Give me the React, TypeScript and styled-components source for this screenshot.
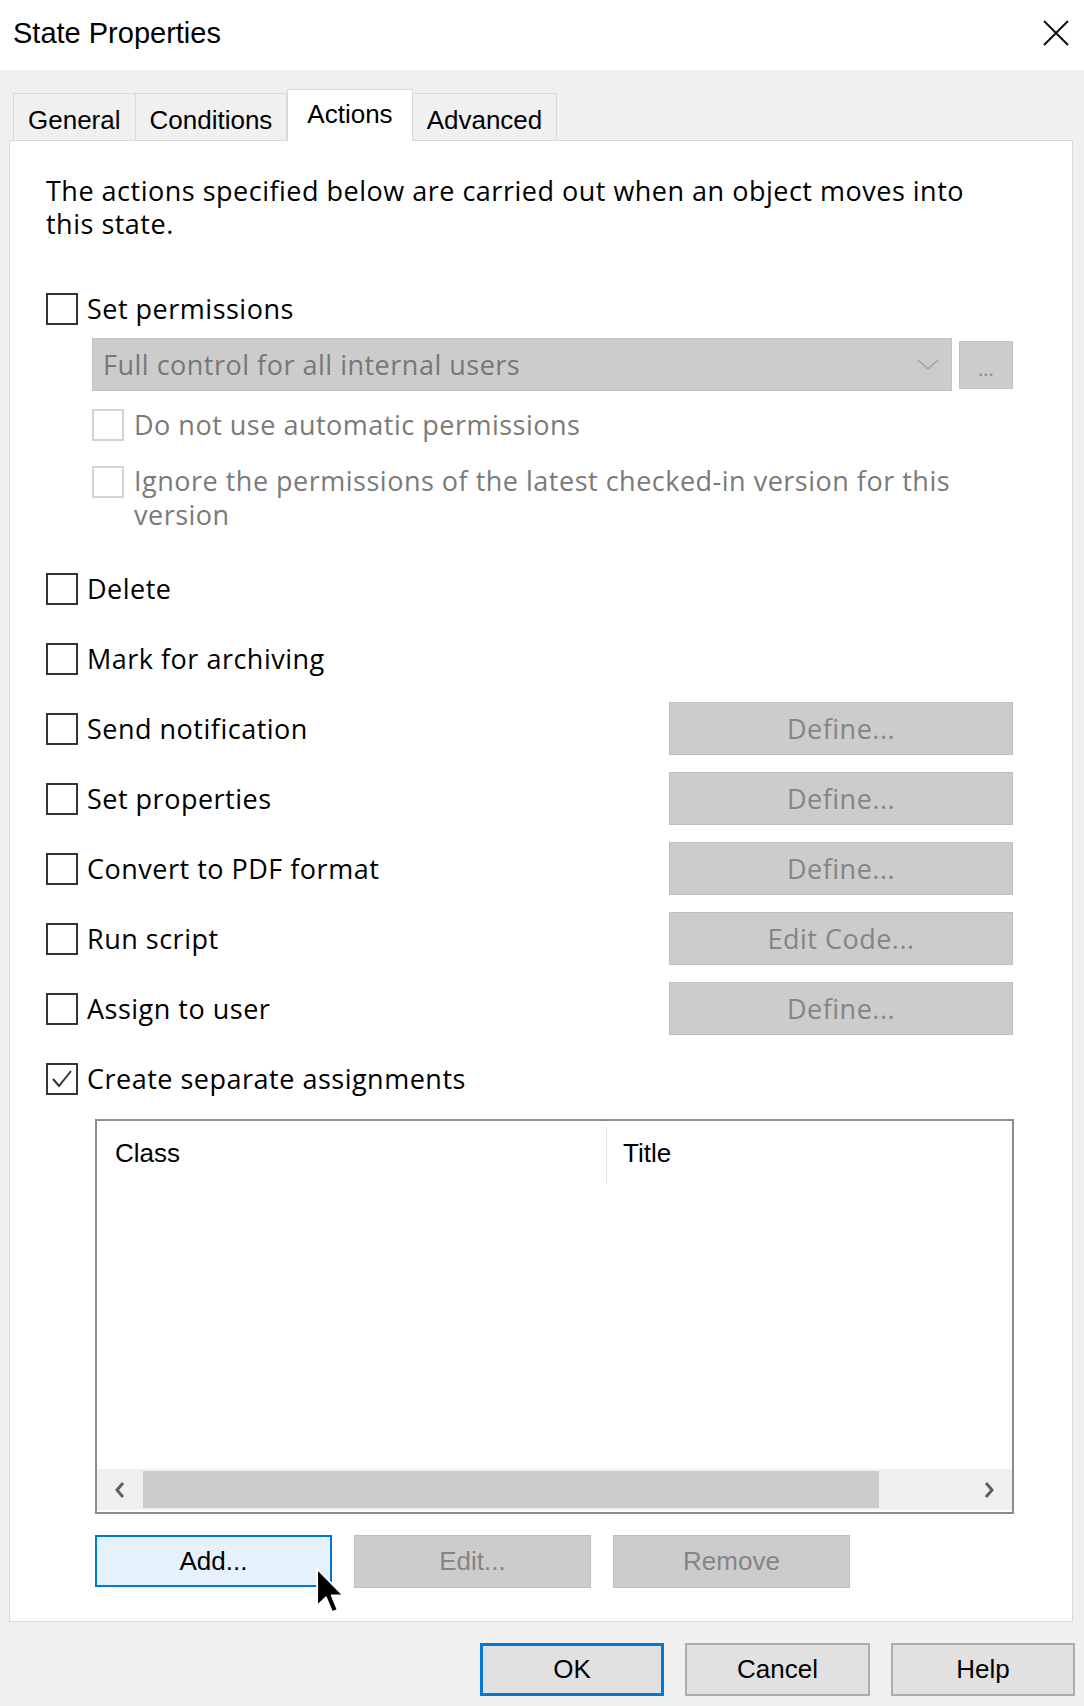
import React from 'react';
import styled, { createGlobalStyle } from 'styled-components';

const GlobalStyle = createGlobalStyle`
  html, body {
    margin: 0;
    padding: 0;
    background: #f0f0f0;
  }
  body {
    font-family: "Open Sans", "Segoe UI", sans-serif;
    color: #000;
  }
`;

const narrow = `"Liberation Sans", Arial, sans-serif`;
const wide = `"Open Sans", "Noto Sans", sans-serif`;

const Dialog = styled.div`
  width: 1084px;
  height: 1706px;
  background: #f0f0f0;
  display: flex;
  flex-direction: column;
  overflow: hidden;
`;

const TitleBar = styled.div`
  height: 70px;
  flex: none;
  background: #fff;
  display: flex;
  align-items: center;
  justify-content: space-between;
  padding: 0 14px 4px 13px;
  box-sizing: border-box;
`;

const Title = styled.span`
  font-family: ${narrow};
  font-size: 29px;
  color: #000;
`;

const CloseButton = styled.button`
  width: 28px;
  height: 28px;
  padding: 0;
  border: none;
  background: transparent;
  display: flex;
`;

const Body = styled.div`
  flex: 1;
  display: flex;
  flex-direction: column;
  padding: 19px 11px 0 9px;
  min-height: 0;
`;

const TabStrip = styled.div`
  height: 51px;
  flex: none;
  display: flex;
  align-items: flex-end;
  padding-left: 4px;
`;

const Tab = styled.div<{ $active?: boolean }>`
  position: relative;
  box-sizing: border-box;
  height: ${p => (p.$active ? '52px' : '47px')};
  margin-bottom: ${p => (p.$active ? '-1px' : '0')};
  margin-left: ${p => (p.$active ? '0' : '-1px')};
  padding: ${p => (p.$active ? '9px 19px 0' : '11px 14px 0')};
  border: 1px solid #d9d9d9;
  border-bottom: none;
  background: ${p => (p.$active ? '#fff' : '#f0f0f0')};
  z-index: ${p => (p.$active ? 2 : 1)};
  font-family: ${narrow};
  font-size: 26px;
  line-height: 30px;
  color: #000;
  &:first-child {
    margin-left: 0;
  }
`;

const Panel = styled.div`
  flex: 1;
  display: flex;
  flex-direction: column;
  background: #fff;
  border: 1px solid #d9d9d9;
  padding: 33px 59px 0 36px;
  min-height: 0;
`;

const Description = styled.p`
  margin: 0;
  font-family: ${wide};
  font-size: 27px;
  line-height: 33px;
  letter-spacing: 0.5px;
`;

const CheckRow = styled.label<{ $top?: number; $disabled?: boolean }>`
  display: flex;
  align-items: center;
  gap: 9px;
  margin-top: ${p => p.$top ?? 0}px;
  font-family: ${wide};
  font-size: 27px;
  line-height: 32px;
  letter-spacing: 0.5px;
  color: ${p => (p.$disabled ? '#7a7a7a' : '#000')};
`;

const WrapRow = styled(CheckRow)`
  align-items: flex-start;
  gap: 10px;
  & > span:last-child {
    line-height: 34px;
    margin-top: -2px;
  }
`;

const Box = styled.span<{ $disabled?: boolean }>`
  flex: none;
  width: 32px;
  height: 32px;
  box-sizing: border-box;
  border: 2px solid ${p => (p.$disabled ? '#d4d4d4' : '#333')};
  background: #fff;
  display: flex;
  align-items: center;
  justify-content: center;
`;

const SubBlock = styled.div`
  margin-left: 46px;
  margin-top: 13px;
  display: flex;
  flex-direction: column;
`;

const ComboRow = styled.div`
  display: flex;
  align-items: center;
  gap: 7px;
`;

const Combo = styled.div`
  width: 860px;
  height: 53px;
  box-sizing: border-box;
  background: #cccccc;
  border: 1px solid #c2c2c2;
  display: flex;
  align-items: center;
  justify-content: space-between;
  padding: 0 12px 0 10px;
  font-family: ${wide};
  font-size: 27px;
  letter-spacing: 0.5px;
  color: #777;
`;

const MoreButton = styled.div`
  width: 54px;
  height: 48px;
  box-sizing: border-box;
  background: #cccccc;
  border: 1px solid #c2c2c2;
  display: flex;
  align-items: center;
  justify-content: center;
  padding-top: 8px;
  font-family: ${wide};
  font-size: 20px;
  color: #8a8a8a;
`;

const ActionList = styled.div`
  margin-top: 30px;
  display: flex;
  flex-direction: column;
  gap: 17px;
`;

const ActionRow = styled.div`
  height: 53px;
  display: flex;
  align-items: center;
  justify-content: space-between;
`;

const GrayButton = styled.div<{ $width?: number; $font?: 'wide' | 'narrow' }>`
  width: ${p => p.$width ?? 344}px;
  height: 53px;
  box-sizing: border-box;
  background: #cccccc;
  border: 1px solid #bfbfbf;
  display: flex;
  align-items: center;
  justify-content: center;
  font-family: ${p => (p.$font === 'narrow' ? narrow : wide)};
  font-size: ${p => (p.$font === 'narrow' ? 26 : 27)}px;
  letter-spacing: ${p => (p.$font === 'narrow' ? 0 : 0.5)}px;
  color: #858585;
`;

const ListView = styled.div`
  margin: 14px 0 0 49px;
  width: 919px;
  height: 395px;
  box-sizing: border-box;
  border: 2px solid #8b8c90;
  display: flex;
  flex-direction: column;
  padding-top: 6px;
`;

const HeaderRow = styled.div`
  height: 56px;
  display: flex;
  font-family: ${narrow};
  font-size: 26px;
`;

const HeaderCell = styled.div<{ $width?: number; $pad: number }>`
  box-sizing: border-box;
  width: ${p => (p.$width ? `${p.$width}px` : 'auto')};
  flex: ${p => (p.$width ? 'none' : 1)};
  padding-left: ${p => p.$pad}px;
  padding-bottom: 4px;
  display: flex;
  align-items: center;
  border-right: ${p => (p.$width ? '1px solid #e5e5e5' : 'none')};
`;

const ListBody = styled.div`
  flex: 1;
`;

const ScrollBar = styled.div`
  height: 41px;
  margin-bottom: 2px;
  background: #f0f0f0;
  display: flex;
  align-items: center;
`;

const ScrollArrow = styled.div`
  width: 46px;
  height: 100%;
  display: flex;
  align-items: center;
  justify-content: center;
`;

const ScrollTrack = styled.div`
  flex: 1;
  height: 37px;
  display: flex;
`;

const ScrollThumb = styled.div`
  width: 736px;
  height: 100%;
  background: #cdcdcd;
`;

const ButtonRow = styled.div`
  margin: 21px 0 0 49px;
  display: flex;
  gap: 22px;
`;

const AddButton = styled.div`
  position: relative;
  width: 237px;
  height: 52px;
  box-sizing: border-box;
  background: #e5f1fb;
  border: 2px solid #0078d7;
  display: flex;
  align-items: center;
  justify-content: center;
  font-family: ${narrow};
  font-size: 26px;
  color: #000;
`;

const Pointer = styled.svg`
  position: absolute;
  left: 219px;
  top: 30px;
  z-index: 5;
`;

const Footer = styled.div`
  flex: none;
  display: flex;
  justify-content: flex-end;
  gap: 21px;
  padding: 21px 9px 10px 0;
`;

const DialogButton = styled.div<{ $default?: boolean; $width: number }>`
  width: ${p => p.$width}px;
  height: 53px;
  box-sizing: border-box;
  background: #e1e1e1;
  border: ${p => (p.$default ? '3px solid #0078d7' : '2px solid #adadad')};
  display: flex;
  align-items: center;
  justify-content: center;
  font-family: ${narrow};
  font-size: 26px;
  color: #000;
`;

const Check = ({ checked, disabled }: { checked?: boolean; disabled?: boolean }) => (
  <Box $disabled={disabled}>
    {checked && (
      <svg width="24" height="24" viewBox="0 0 24 24">
        <polyline points="3,12 9,19 21,4" fill="none" stroke="#333" strokeWidth="2" />
      </svg>
    )}
  </Box>
);

const actions: { label: string; button?: string; checked?: boolean }[] = [
  { label: 'Delete' },
  { label: 'Mark for archiving' },
  { label: 'Send notification', button: 'Define...' },
  { label: 'Set properties', button: 'Define...' },
  { label: 'Convert to PDF format', button: 'Define...' },
  { label: 'Run script', button: 'Edit Code...' },
  { label: 'Assign to user', button: 'Define...' },
  { label: 'Create separate assignments', checked: true },
];

const App: React.FC = () => {
  return (
    <Dialog>
      <GlobalStyle />
      <TitleBar>
        <Title>State Properties</Title>
        <CloseButton aria-label="Close">
          <svg width="28" height="28" viewBox="0 0 28 28">
            <path d="M2 2 L26 26 M26 2 L2 26" stroke="#111" strokeWidth="2" fill="none" />
          </svg>
        </CloseButton>
      </TitleBar>

      <Body>
        <TabStrip>
          <Tab>General</Tab>
          <Tab>Conditions</Tab>
          <Tab $active>Actions</Tab>
          <Tab>Advanced</Tab>
        </TabStrip>

        <Panel>
          <Description>
            The actions specified below are carried out when an object moves into this state.
          </Description>

          <CheckRow $top={53}>
            <Check />
            <span>Set permissions</span>
          </CheckRow>

          <SubBlock>
            <ComboRow>
              <Combo>
                <span>Full control for all internal users</span>
                <svg width="22" height="12" viewBox="0 0 22 12">
                  <polyline points="1,1 11,10 21,1" fill="none" stroke="#a3a3a3" strokeWidth="1.6" />
                </svg>
              </Combo>
              <MoreButton>...</MoreButton>
            </ComboRow>
            <CheckRow $top={18} $disabled style={{ gap: 10 }}>
              <Check disabled />
              <span>Do not use automatic permissions</span>
            </CheckRow>
            <WrapRow $top={25} $disabled>
              <Check disabled />
              <span>Ignore the permissions of the latest checked-in version for this version</span>
            </WrapRow>
          </SubBlock>

          <ActionList>
            {actions.map(a => (
              <ActionRow key={a.label}>
                <CheckRow>
                  <Check checked={a.checked} />
                  <span>{a.label}</span>
                </CheckRow>
                {a.button && <GrayButton>{a.button}</GrayButton>}
              </ActionRow>
            ))}
          </ActionList>

          <ListView>
            <HeaderRow>
              <HeaderCell $width={510} $pad={18}>Class</HeaderCell>
              <HeaderCell $pad={16}>Title</HeaderCell>
            </HeaderRow>
            <ListBody />
            <ScrollBar>
              <ScrollArrow>
                <svg width="12" height="18" viewBox="0 0 12 18">
                  <polyline points="9,2 3,9 9,16" fill="none" stroke="#606060" strokeWidth="3" />
                </svg>
              </ScrollArrow>
              <ScrollTrack>
                <ScrollThumb />
              </ScrollTrack>
              <ScrollArrow>
                <svg width="12" height="18" viewBox="0 0 12 18">
                  <polyline points="3,2 9,9 3,16" fill="none" stroke="#606060" strokeWidth="3" />
                </svg>
              </ScrollArrow>
            </ScrollBar>
          </ListView>

          <ButtonRow>
            <AddButton>
              Add...
              <Pointer width="30" height="50" viewBox="0 0 13 21">
                <path
                  d="M0.5 0.5 L0.5 16.5 L4.3 12.8 L7 19.2 L9.4 18.2 L6.8 12 L11.8 12 Z"
                  fill="#000"
                  stroke="#fff"
                  strokeWidth="0.8"
                  strokeLinejoin="round"
                />
              </Pointer>
            </AddButton>
            <GrayButton $width={237} $font="narrow">Edit...</GrayButton>
            <GrayButton $width={237} $font="narrow">Remove</GrayButton>
          </ButtonRow>
        </Panel>
      </Body>

      <Footer>
        <DialogButton $default $width={184}>OK</DialogButton>
        <DialogButton $width={185}>Cancel</DialogButton>
        <DialogButton $width={184}>Help</DialogButton>
      </Footer>
    </Dialog>
  );
};

export default App;
